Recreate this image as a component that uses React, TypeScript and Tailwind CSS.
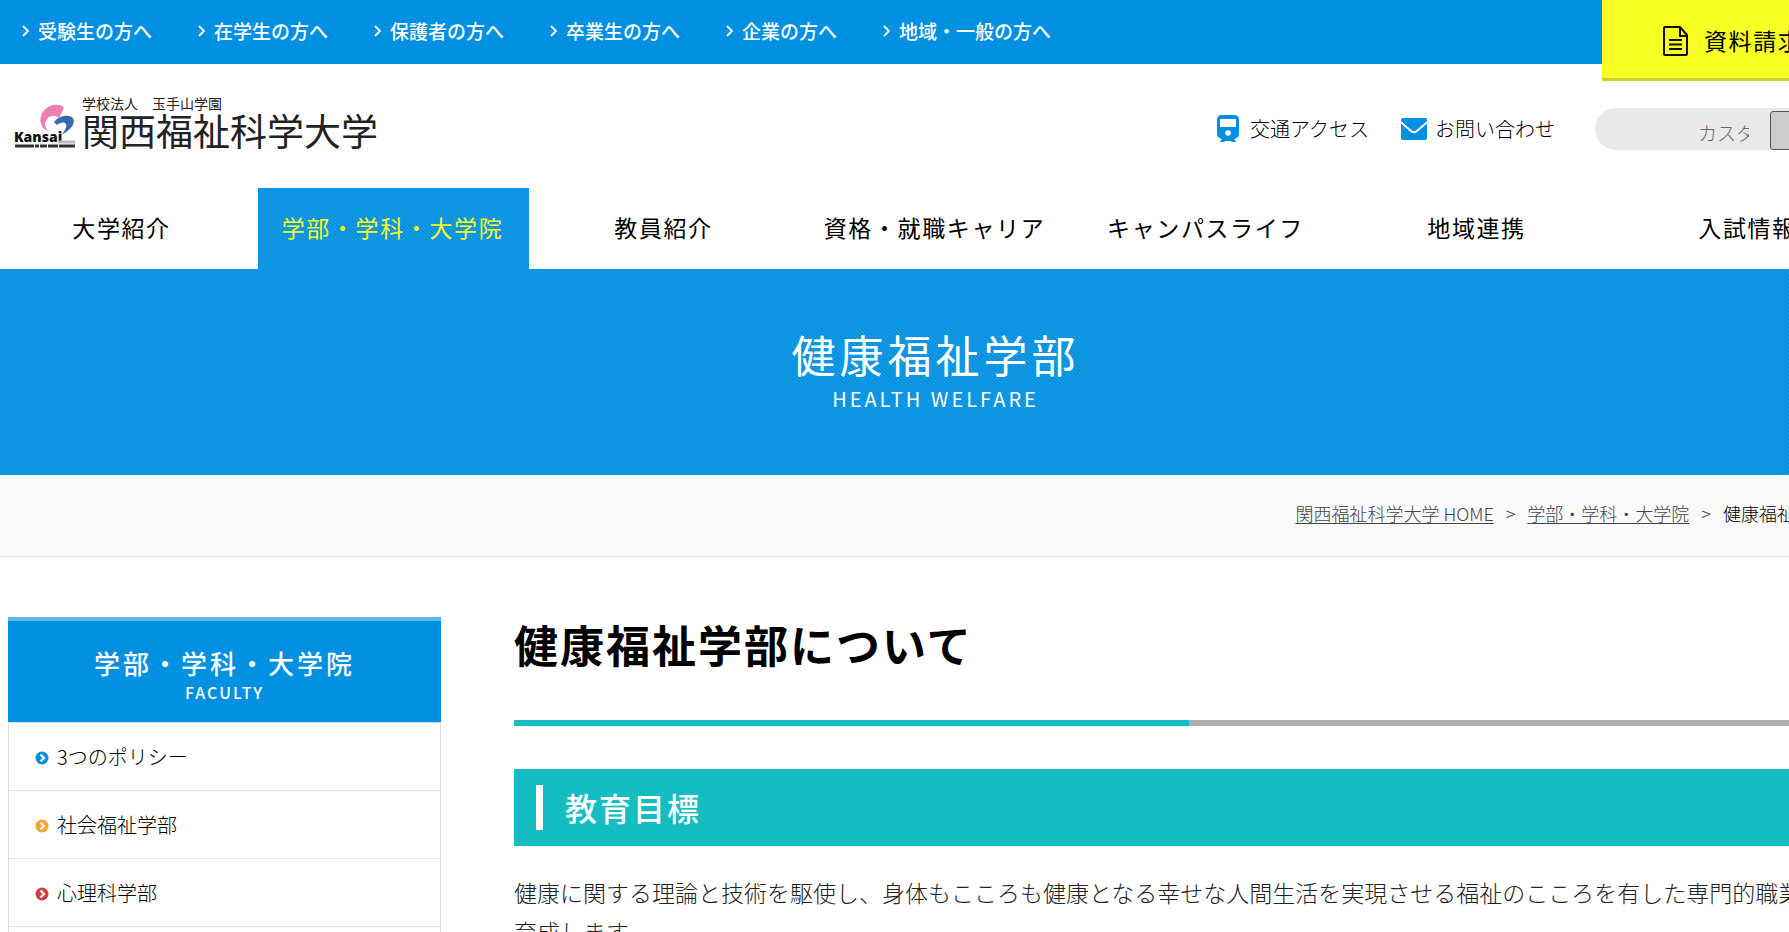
import React from "react";

type MenuItem = { label: string; color: string };

const audienceLinks: string[] = [
  "受験生の方へ",
  "在学生の方へ",
  "保護者の方へ",
  "卒業生の方へ",
  "企業の方へ",
  "地域・一般の方へ",
];

const navLinks: string[] = [
  "大学紹介",
  "学部・学科・大学院",
  "教員紹介",
  "資格・就職キャリア",
  "キャンパスライフ",
  "地域連携",
  "入試情報",
];

const menuItems: MenuItem[] = [
  { label: "3つのポリシー", color: "text-[#0090e2]" },
  { label: "社会福祉学部", color: "text-[#f9a42f]" },
  { label: "心理科学部", color: "text-[#d04040]" },
  { label: "健康福祉学部", color: "text-[#14bdc1]" },
];

// Diagonal hairlines over the brand blue, tiled every 4px
const stripes =
  "bg-[#0c96e1] bg-[linear-gradient(45deg,#0591df_25%,#159be4_25%,#159be4_50%,#0591df_50%,#0591df_75%,#159be4_75%)] bg-size-[4px_4px]";

const Logo: React.FC = () => (
  <a href="/" className="flex items-end gap-[3px] text-[#222]">
    <svg width="65" height="46" viewBox="0 0 65 46" aria-hidden="true">
      <path
        d="M34 28C28 26 25 19 27 13C29 6 37 1 44 2C48 2 51 4 49 7L45 15C41 12 36 12 33 16C30 20 31 24 34 28Z"
        fill="#ee7fae"
      />
      <path
        d="M40 19C43 15 49 12 55 13C64 15 60 26 47 32C52 27 54 22 51 20C48 19 46 20 43 22Z"
        fill="#366bae"
      />
      <text
        x="0"
        y="39"
        fontFamily="Liberation Sans Narrow, Open Sans, sans-serif"
        fontSize="14"
        fontWeight="800"
        fill="#111"
      >
        Kansai
      </text>
      <path d="M44 39H61" stroke="#bbb" strokeWidth="3" />
      <path d="M1 43H61" stroke="#333" strokeWidth="3" strokeDasharray="19 1 4 1 7 1 10 1" />
    </svg>
    <span className="flex flex-col">
      <span className="text-[14px] leading-[18px]">学校法人　玉手山学園</span>
      <span className="text-[37px] leading-[37px]">関西福祉科学大学</span>
    </span>
  </a>
);

const TrainIcon: React.FC = () => (
  <svg width="24" height="28" viewBox="0 0 24 28" fill="#0090e2" aria-hidden="true">
    <path
      fillRule="evenodd"
      d="M6 0H18Q23 0 23 5V19Q23 23 18 24L20 27H16L14.5 26H9.5L8 27H4L6 24Q1 23 1 19V5Q1 0 6 0ZM4.5 4Q4 4 4 5V12H20V5Q20 4 19.5 4ZM12 15.2A2.8 2.8 0 1 0 12 20.8A2.8 2.8 0 1 0 12 15.2Z"
    />
  </svg>
);

const MailIcon: React.FC = () => (
  <svg width="26" height="22" viewBox="0 0 26 22" fill="#0090e2" aria-hidden="true">
    <path d="M2 0H24Q26 0 26 2V3L15 12.5Q13 14 11 12.5L0 3V2Q0 0 2 0Z" />
    <path d="M0 5.5L10 14.2Q13 16.5 16 14.2L26 5.5V20Q26 22 24 22H2Q0 22 0 20Z" />
  </svg>
);

const DocumentIcon: React.FC = () => (
  <svg
    width="26"
    height="30"
    viewBox="0 0 26 30"
    fill="none"
    stroke="#111"
    strokeWidth="2"
    aria-hidden="true"
  >
    <path d="M2 1H17L24 9V28Q24 29 23 29H2Q1 29 1 28V2Q1 1 2 1Z" />
    <path d="M17 1V10H25M6 14H19M6 18.5H19M6 23H19" />
  </svg>
);

const BulletIcon: React.FC<{ color: string }> = ({ color }) => (
  <svg width="14" height="16" viewBox="0 0 14 16" className={color} aria-hidden="true">
    <circle cx="7" cy="9" r="6.5" fill="currentColor" />
    <path d="M5.5 5.5L9 9L5.5 12.5" fill="none" stroke="#fff" strokeWidth="2.2" />
  </svg>
);

const TopBar: React.FC = () => (
  <div className="flex h-16 items-start justify-between bg-[#0090e2]">
    <ul className="flex gap-11 pt-4 pl-5 text-[19px] leading-[30px] font-medium text-white">
      {audienceLinks.map((label) => (
        <li key={label}>
          <a href="#" className="flex items-center gap-2">
            <svg width="10" height="12" viewBox="0 0 10 12" fill="none" aria-hidden="true">
              <path d="M3 1L8 6L3 11" stroke="#fff" strokeWidth="1.8" />
            </svg>
            {label}
          </a>
        </li>
      ))}
    </ul>
    <a
      href="#"
      className="flex h-[81px] w-[269px] items-center gap-[15px] border-b-[3px] border-[#cbd02f] bg-[#f7fd22] pt-1 pl-[61px] text-[23px] tracking-[0.07em] text-black"
    >
      <DocumentIcon />
      <span className="pb-0.5">資料請求</span>
    </a>
  </div>
);

const Header: React.FC = () => (
  <header>
    <TopBar />
    <div className="flex h-[124px] items-start justify-between">
      <div className="pt-[30px] pl-3.5">
        <Logo />
      </div>
      <div className="flex items-center pt-11 text-[20px] font-light text-black">
        <a href="#" className="mr-8 flex items-center gap-2.5">
          <TrainIcon />
          交通アクセス
        </a>
        <a href="#" className="mr-10 flex items-center gap-2">
          <MailIcon />
          お問い合わせ
        </a>
        <form className="flex h-[42px] w-[276px] items-end rounded-l-full bg-[#e9e9e9] pl-[103px]">
          <input
            type="text"
            aria-label="カスタム検索"
            placeholder="カスタム検索"
            className="h-9 w-[51px] text-[19px] font-light outline-none placeholder:text-[#666]"
          />
          <button
            type="submit"
            aria-label="検索"
            className="ml-[21px] h-[39px] w-16 rounded-[3px] border border-[#555] bg-[#ccc]"
          />
        </form>
      </div>
    </div>
    <nav className="overflow-hidden">
      <ul className="flex justify-center">
        {navLinks.map((label, i) => (
          <li key={label} className="w-[271px] shrink-0">
            <a
              href="#"
              className={`flex h-[81px] items-center justify-center pr-0.5 pb-0.5 text-[23px] tracking-[0.07em] ${
                i === 1 ? `${stripes} text-[#f7fd22]` : "text-black"
              }`}
            >
              {label}
            </a>
          </li>
        ))}
      </ul>
    </nav>
  </header>
);

const Hero: React.FC = () => (
  <div className={`flex h-[206px] flex-col items-center pt-[55px] text-white ${stripes}`}>
    <p className="text-[44px] leading-[60px] tracking-[4px]">健康福祉学部</p>
    <p className="text-[20px] leading-[30px] tracking-[3px]">HEALTH WELFARE</p>
  </div>
);

const Breadcrumb: React.FC = () => (
  <nav
    aria-label="パンくず"
    className="flex h-[82px] items-center justify-end border-b border-[#e8e8e8] bg-[#f9f9f9] pr-10 pb-1 text-[18px] font-light text-[#444]"
  >
    <a href="#" className="underline underline-offset-2">
      関西福祉科学大学 HOME
    </a>
    <span className="mx-3">&gt;</span>
    <a href="#" className="underline underline-offset-2">
      学部・学科・大学院
    </a>
    <span className="mx-3">&gt;</span>
    <span className="text-black">健康福祉学部</span>
  </nav>
);

const Sidebar: React.FC = () => (
  <aside className="w-[433px] shrink-0">
    <div className="h-[105px] border-t-4 border-[#5bb9ee] bg-[#0090e2] pt-6 text-center font-medium text-white">
      <p className="text-[26px] leading-9 tracking-[3px]">学部・学科・大学院</p>
      <p className="text-[16px] leading-[22px] tracking-[2px]">FACULTY</p>
    </div>
    <ul className="border border-[#ddd] text-[20px] font-light text-black">
      {menuItems.map(({ label, color }) => (
        <li key={label} className="border-b border-dotted border-[#ccc]">
          <a href="#" className="flex h-[67px] items-center gap-2 pl-[26px]">
            <BulletIcon color={color} />
            {label}
          </a>
        </li>
      ))}
    </ul>
  </aside>
);

const App: React.FC = () => {
  return (
    <div className="h-screen overflow-hidden bg-white font-['Noto_Sans_CJK_JP',sans-serif]">
      <div className="min-w-[1871px]">
        <Header />
        <Hero />
        <Breadcrumb />
        <div className="flex gap-[73px] px-2 pt-[60px]">
          <Sidebar />
          <main className="grow">
            <h1 className="text-[44px] leading-[54px] font-bold tracking-[2px] text-black">
              健康福祉学部について
            </h1>
            <div className="mt-[49px] h-1.5 bg-[#aeaeae]">
              <div className="h-full w-1/2 bg-[#14bdc1]" />
            </div>
            <h2 className="mt-[43px] flex h-[77px] items-center gap-[22px] bg-[#14bdc1] pl-[22px] text-[32px] font-medium tracking-[2px] text-white">
              <span className="h-[45px] w-[7px] bg-white" />
              <span className="pb-0.5">教育目標</span>
            </h2>
            <p className="mt-[27px] text-[23px] leading-[39px] font-light text-[#222]">
              健康に関する理論と技術を駆使し、身体もこころも健康となる幸せな人間生活を実現させる福祉のこころを有した専門的職業人を
              <br />
              育成します。
            </p>
          </main>
        </div>
      </div>
    </div>
  );
};

export default App;
